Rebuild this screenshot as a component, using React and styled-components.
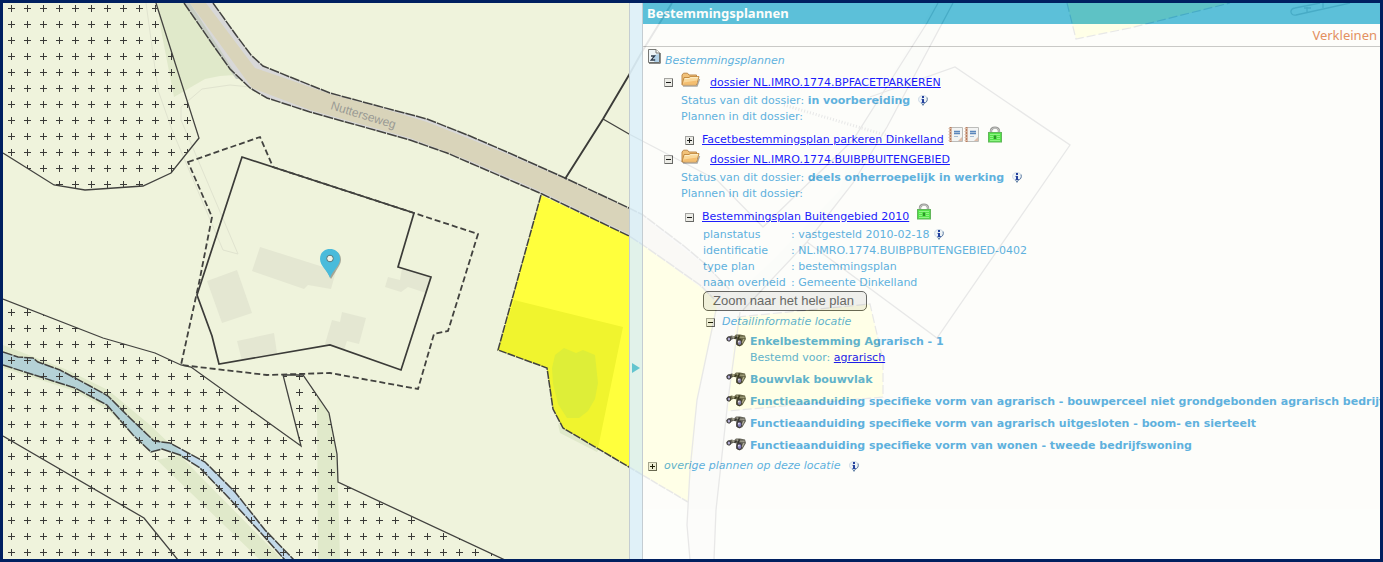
import React, { useState } from 'react';
import styled, { createGlobalStyle } from 'styled-components';

const dossiers = [
    {
        id: 'NL.IMRO.1774.BPFACETPARKEREN',
        status: 'in voorbereiding',
        plan: { name: 'Facetbestemmingsplan parkeren Dinkelland', documents: 2, open: false },
    },
    {
        id: 'NL.IMRO.1774.BUIBPBUITENGEBIED',
        status: 'deels onherroepelijk in werking',
        plan: { name: 'Bestemmingsplan Buitengebied 2010', documents: 0, open: true },
    },
];

const planDetails = [
    { label: 'planstatus', value: 'vastgesteld 2010-02-18', info: true },
    { label: 'identificatie', value: 'NL.IMRO.1774.BUIBPBUITENGEBIED-0402' },
    { label: 'type plan', value: 'bestemmingsplan' },
    { label: 'naam overheid', value: 'Gemeente Dinkelland' },
];

const locationDetails = [
    { title: 'Enkelbestemming Agrarisch - 1', purpose: 'agrarisch' },
    { title: 'Bouwvlak bouwvlak' },
    { title: 'Functieaanduiding specifieke vorm van agrarisch - bouwperceel niet grondgebonden agrarisch bedrijf' },
    { title: 'Functieaanduiding specifieke vorm van agrarisch uitgesloten - boom- en sierteelt' },
    { title: 'Functieaanduiding specifieke vorm van wonen - tweede bedrijfswoning' },
];

export default function App() {
    const [panelOpen, setPanelOpen] = useState(true);

    return (
        <>
            <GlobalStyle />
            <Viewer>
                <PlanMap />
                <MapArea />
                <Handle aria-label="Paneel in- of uitklappen" onClick={() => setPanelOpen(!panelOpen)}>
                    <svg width="8" height="10" viewBox="0 0 8 10"><path d="M0 0L8 5L0 10Z" fill="#63c5cf" /></svg>
                </Handle>
                {panelOpen && <PlanPanel />}
            </Viewer>
        </>
    );
}

function PlanPanel() {
    return (
        <Panel>
            <PanelHeader>Bestemmingsplannen</PanelHeader>
            <Toolbar>
                <ShrinkLink href="#">Verkleinen</ShrinkLink>
            </Toolbar>
            <Tree>
                <RootRow>
                    <SheetIcon />
                    <em>Bestemmingsplannen</em>
                </RootRow>
                {dossiers.map((dossier) => (
                    <Dossier key={dossier.id} dossier={dossier} />
                ))}
                <OtherRow>
                    <Toggle label="overige plannen" />
                    <em>overige plannen op deze locatie</em>
                    <InfoIcon $tight />
                </OtherRow>
            </Tree>
        </Panel>
    );
}

function Dossier({ dossier }) {
    const [open, setOpen] = useState(true);
    return (
        <DossierBlock>
            <DossierRow>
                <Toggle label={dossier.id} open={open} onClick={() => setOpen(!open)} />
                <FolderIcon />
                <PlanLink href="#">dossier {dossier.id}</PlanLink>
            </DossierRow>
            {open && (
                <DossierBody>
                    <Line>Status van dit dossier: <b>{dossier.status}</b><InfoIcon /></Line>
                    <Line>Plannen in dit dossier:</Line>
                    <Plan plan={dossier.plan} />
                </DossierBody>
            )}
        </DossierBlock>
    );
}

function Plan({ plan }) {
    const [open, setOpen] = useState(plan.open);
    return (
        <PlanBlock>
            <PlanRow>
                <Toggle label={plan.name} open={open} onClick={() => setOpen(!open)} />
                <PlanLink href="#">{plan.name}</PlanLink>
                <PlanIcons $wide={plan.documents === 0}>
                    {Array.from({ length: plan.documents }, (_, i) => <NotebookIcon key={i} />)}
                    <LockIcon />
                </PlanIcons>
            </PlanRow>
            {open && <PlanBody />}
        </PlanBlock>
    );
}

function PlanBody() {
    const [open, setOpen] = useState(true);
    return (
        <Details>
            <DetailTable>
                <tbody>
                    {planDetails.map((row) => (
                        <tr key={row.label}>
                            <th scope="row">{row.label}</th>
                            <td>: {row.value}{row.info && <InfoIcon $tight />}</td>
                        </tr>
                    ))}
                </tbody>
            </DetailTable>
            <ZoomButton>Zoom naar het hele plan</ZoomButton>
            <LocationRow>
                <Toggle label="Detailinformatie locatie" open={open} onClick={() => setOpen(!open)} />
                <em>Detailinformatie locatie</em>
            </LocationRow>
            {open && (
                <LocationList>
                    {locationDetails.map((item) => (
                        <LocationItem key={item.title}>
                            <BinocularsIcon />
                            <div>
                                <b>{item.title}</b>
                                {item.purpose && <div>Bestemd voor: <PlanLink href="#">{item.purpose}</PlanLink></div>}
                            </div>
                        </LocationItem>
                    ))}
                </LocationList>
            )}
        </Details>
    );
}

function Toggle({ label, open, onClick }) {
    return (
        <ToggleButton aria-label={label} aria-expanded={!!open} onClick={onClick}>
            <svg width="9" height="9" viewBox="0 0 9 9" shapeRendering="crispEdges">
                <rect x="0.5" y="0.5" width="8" height="8" fill="#ecece8" stroke="#9a9a9a" />
                <path d="M1 8.5H8.5V1" fill="none" stroke="#555" />
                <path d={open ? 'M2 4.5H7' : 'M2 4.5H7M4.5 2V7'} stroke="#000" />
            </svg>
        </ToggleButton>
    );
}

function InfoIcon({ $tight }) {
    return (
        <InfoSvg $tight={$tight} width="10" height="11" viewBox="0 0 10 11">
            <path d="M5 0.5C7.6 0.5 9.5 2.1 9.5 4.4C9.5 6.5 8 7.8 6.4 8.2L5 10.5L4 8.3C2 8 0.5 6.5 0.5 4.4C0.5 2.1 2.4 0.5 5 0.5Z" fill="#edf3fa" stroke="#bccbe0" strokeWidth="0.7" />
            <path d="M9 2.5C10 5 8.5 7.6 6.4 8L5 10.300L3.600 8.200" fill="none" stroke="#54749f" />
            <path d="M5 4V8" fill="none" stroke="#0a2a96" strokeWidth="2" />
            <path d="M3.500 4.400H5M3.500 7.500H6.800" fill="none" stroke="#0a2a96" strokeWidth="0.900" />
            <rect x="4" y="1" width="2" height="2" fill="#0a2a96" />
        </InfoSvg>
    );
}

function SheetIcon() {
    return (
        <svg width="13" height="15" viewBox="0 0 13 15">
            <path d="M0.5 0.5H8L11.5 4V13.5H0.5Z" fill="#eef5fb" stroke="#666" />
            <path d="M6 13V6L11 5V13Z" fill="#a9cdea" />
            <path d="M8 0.5V4H11.5" fill="#fff" stroke="#666" />
            <path d="M12.300 4V14.300H1" fill="none" stroke="#333" strokeWidth="0.800" />
            <path d="M3 7H6.600L3.200 11H7.200" fill="none" stroke="#16263c" strokeWidth="1.300" />
        </svg>
    );
}

function FolderIcon() {
    return (
        <svg width="20" height="16" viewBox="0 0 20 16">
            <path d="M2 14H16L18.500 7" fill="none" stroke="#777" strokeWidth="1.500" opacity="0.700" />
            <path d="M1 12.500V3L2.500 1.200H6.500L8 3H15.500V6" fill="#f3bc6c" stroke="#b87c38" />
            <path d="M1 13L3 5.500H8L9 4.600H18L15.500 13Z" fill="#fcd592" stroke="#b87525" strokeWidth="0.900" />
            <path d="M3.800 6.600H8.500L9.500 5.700H17" fill="none" stroke="#fff1cc" />
            <path d="M2 12.400L2.600 10.500L16 8.500L15 12.400Z" fill="#f5b762" />
        </svg>
    );
}

function NotebookIcon() {
    return (
        <svg width="16" height="17" viewBox="0 0 16 17">
            <path d="M2.5 1.5H14.5V15.5H2.5Z" fill="#f4f5f7" stroke="#b5b5b5" />
            <path d="M2.5 1V16" stroke="#b36b4b" strokeWidth="2" />
            <path d="M0.5 2.5H4M0.5 5.5H4M0.5 8.5H4M0.5 11.5H4M0.5 14.5H4" stroke="#d8b5a0" />
            <path d="M6 5.5H12M6 7.5H12" stroke="#4778b8" strokeWidth="1.300" />
            <path d="M6 10.5H10" stroke="#9db4d2" />
            <path d="M10 15L14 11V15Z" fill="#dcb6a4" />
        </svg>
    );
}

function LockIcon() {
    return (
        <svg width="14" height="17" viewBox="0 0 14 17">
            <path d="M3 8V5C3 0.500 11 0.500 11 5V8" fill="none" stroke="#8b8b8b" strokeWidth="2.400" />
            <path d="M3 8V5C3 1 11 1 11 5V8" fill="none" stroke="#cfcfcf" strokeWidth="0.900" />
            <rect x="0.5" y="6.5" width="13" height="9.5" fill="#3fe036" stroke="#4fae49" />
            <path d="M2 8.5H12M2 10.5H5M9 10.5H12M2 12.5H5M9 12.5H12M2 14.5H12" stroke="#84f57a" />
            <path d="M7 9.5V13" stroke="#158a14" strokeWidth="2" />
        </svg>
    );
}

function BinocularsIcon() {
    return (
        <svg width="20" height="13" viewBox="0 0 20 13">
            <path d="M0 4.500L2 2.500L6 1.500L8 2.500L10 0.500H14L19 1.500L20 5L16.500 11L13.500 12.500L10 10.500L10.500 5.500L7.500 4.800L5 6L3.500 7.500L1 7Z" fill="#55534a" />
            <path d="M6 2.800L8.500 3.500M10.500 1.800L14 3L18.500 3.200M18 5L16 9" fill="none" stroke="#aeab99" strokeWidth="1.100" />
            <path d="M13.500 1.500L12 5M8.500 4.500L10.500 3" stroke="#1b1a17" strokeWidth="1.500" />
            <ellipse cx="3" cy="5" rx="2.200" ry="2.400" fill="#2b282e" />
            <ellipse cx="2.900" cy="5" rx="1.200" ry="1.500" fill="#a9a3cf" />
            <ellipse cx="13.200" cy="8.300" rx="2.900" ry="3.700" fill="#28252b" />
            <ellipse cx="13.500" cy="8.600" rx="1.800" ry="2.300" fill="#7770b5" />
            <circle cx="12.800" cy="7.600" r="0.900" fill="#e2def7" />
        </svg>
    );
}

const ROAD_TOP = '213,3 236,35 251,55 263,66 290,77 330,93 378,106 427,119 470,136 507,152 565,178 629,208 643,215 684,246 703,262 730,290';
const ROAD_BOTTOM = '184,3 213,45 230,69 250,88 267,98 310,112 353,124 410,140 447,153 470,163 542,194 629,236 643,245 700,285 714,299';
const WATER_TOP = '3,352 18,357 33,358 38,362 60,370 90,386 108,396 130,418 154,441 170,443 190,454 205,462 235,492 265,530 294,560';
const WATER_BOTTOM = '3,365 75,388 107,405 133,435 151,452 162,449 180,455 200,468 228,497 260,532 285,560';
const YARD = '188,162 260,137 273,167 414,213 478,234 448,331 434,334 418,389 330,373 267,375 181,365 199,283 212,217';

function PlanMap() {
    return (
        <MapSvg viewBox="3 3 1377 556" preserveAspectRatio="xMinYMin slice" role="img" aria-label="Kaart">
            <defs>
                <pattern id="crosses" x="3" y="0" width="16" height="16" patternUnits="userSpaceOnUse">
                    <path d="M5 8.5H12M8.5 5V12" stroke="#3b3b38" />
                </pattern>
            </defs>
            <rect x="0" y="0" width="1383" height="900" fill="#eff3dc" />

            {/* planting */}
            <g fill="#e0e9ca">
                <path d="M157 3H184L213 45L235 75L220 76L205 79L174 97L161 30Z" />
                <path d="M3 345L65 369L108 390L150 425L172 446L150 452L107 409L75 391L3 368Z" />
                <path d="M157 460L180 455L197 473L283 560H260Z" />
                <path d="M317 395L329 413L337 454L340 560H318Z" />
                <path d="M558 424L560 433L597 452L600 447Z" />
            </g>

            {/* buildings */}
            <g fill="#e4e7d2">
                <path d="M260 247L336 271L331 289L308 285L304 289L252 271Z" />
                <path d="M207 281L237 270L252 313L222 323Z" />
                <path d="M237 341L274 333L277 353L242 361Z" />
                <path d="M342 312L366 318L359 344L347 341L344 350L325 344L332 320L340 322Z" />
                <path d="M402 268L431 277L426 293L408 287L401 292L385 287L388 277L400 280Z" />
            </g>

            <path d="M146 3L158 90L172 130L223 250L238 254L181 120V107L202 89L230 85L250 87" fill="none" stroke="#e0e3cf" />

            {/* road */}
            <path d={`M${ROAD_TOP} L714,299 ${ROAD_BOTTOM.split(' ').reverse().join(' ')}Z`} fill="#d8d8d8" />
            <path d="M184 3L236 79L239 79L190 3Z" fill="#c8cec3" />
            <path d="M206 3L255 68L290 80L330 94L378 107L427 122L470 139L507 154L565 179L629 209L643 217L703 264L730 292L712 297L643 244L629 234L542 192L470 161L410 138L353 122L310 110L252 88L190 3Z" fill="#d9d4ba" />
            <path d="M717 310L740 310L728 400L716 510L714 560H690L687 525L690 470L697 400Z" fill="#e0e0d4" />
            <path d="M740 310L807 242L853 183L887 127L953 3H935L853 140L840 190L773 260L730 300Z" fill="#e6e8d4" />

            {/* designated areas */}
            <path d="M541 195L629 236L643 245L714 297L717 310L697 400L693 450L688 502L629 467L563 428L553 409L547 368L498 350Z" fill="#ffff3c" />
            <path d="M514 300L623 327L598 448L563 428L553 409L547 368L498 350Z" fill="#f0f42e" />
            <path d="M555 355L564 348L576 353L583 350L595 355L598 383L595 399L588 411L579 418L567 418L558 404L553 384L552 368Z" fill="#deee38" />
            <path d="M737 317L870 304L883 360V397L728 411L730 380Z" fill="#ffff3c" />
            <path d="M1067 3L1076 39L1130 28L1230 3Z" fill="#ffff3c" />

            {/* water */}
            <path d={`M${WATER_TOP} ${WATER_BOTTOM.split(' ').reverse().join(' ')}Z`} fill="#b5d2d6" />
            <path d="M174 445L190 454L205 462L235 492L265 530L294 560H285L260 532L228 497L200 468L185 458Z" fill="#c3daea" />

            <path d="M3 3H156L199 138L171 173L143 186L85 190L54 185L3 153Z" fill="url(#crosses)" />
            <path d="M3 299L103 338L155 353L181 365L191 367L301 446L283 375H303L329 413L337 454L338 482L505 560H3Z" fill="url(#crosses)" />

            <g fill="none" stroke="#42423f" strokeWidth="1.300">
                <path d="M156 3L199 138L171 173L143 186L85 190L54 185L3 153" />
                <path d="M3 299L103 338L155 353L181 365L191 367L301 446L283 375H303L329 413L337 454L338 482L505 560" />
                <path d="M3 436L144 518L178 560" />
                <path d="M603 119L629 134L717 180L763 227L853 140L927 23L938 3" />
                <path d="M807 242L937 338L1070 145L955 67L870 97" />
                <path d="M743 310L807 242L853 183L887 127L953 3M716 310L697 400L690 470L687 525L690 560M740 312L728 400L716 510L714 560" />
                <path d="M1350 3L1296 15C1290 16 1289 9 1295 8L1320 3M1304 8H1311M1307 5V12M1323 3V8" />
            </g>
            <g fill="none" stroke="#3b3b38">
                <path d="M242 157L414 213L398 267L431 277L401 370L330 345L219 364L212 336L197 295Z" strokeWidth="1.700" />
                <path d="M565 179L603 119L629 75L643 50L672 3" strokeWidth="1.900" />
            </g>

            <g fill="none" stroke="#42423f" strokeWidth="1.500">
                <path d={`M${YARD}Z`} strokeDasharray="6 3" strokeWidth="1.800" />
                <path d={`M${ROAD_TOP}`} strokeDasharray="10 1" />
                <path d={`M${ROAD_BOTTOM}`} strokeDasharray="10 1" />
                <path d={`M${WATER_TOP}`} strokeDasharray="10 1" />
                <path d={`M${WATER_BOTTOM}`} strokeDasharray="10 1" />
                <path d="M541 195L498 350L547 368L553 409L563 428L629 467L688 502" strokeDasharray="8 1" />
                <path d="M737 317L870 304L883 360V397L728 411M1067 3L1076 39L1130 28L1230 3" strokeDasharray="9 3" strokeWidth="1.200" />
                <path d="M784 105L892 137" strokeDasharray="1 2" strokeWidth="3" />
            </g>

            <StreetName x="330" y="109" transform="rotate(17 330 109)">Nutterseweg</StreetName>

            <g>
                <path d="M331 279L323 265C317 254 325 250 331 250C339 250 344 258 339 266Z" fill="#55554c" opacity="0.450" />
                <path d="M330 278C328 271 320 266 320 259C320 253 324 249 330 249C336 249 340 253 340 259C340 266 332 271 330 278Z" fill="#4abbdb" />
                <circle cx="330" cy="258.500" r="3.300" fill="#f1f3e6" stroke="#4a6a70" strokeWidth="0.900" />
            </g>
        </MapSvg>
    );
}

const GlobalStyle = createGlobalStyle`
    * {
        box-sizing: border-box;
    }
    body {
        margin: 0;
        color: #4ca9de;
        font: 11px/16px "DejaVu Sans", Verdana, sans-serif;
    }
`;

const Viewer = styled.main`
    position: relative;
    display: flex;
    min-height: 100vh;
    border: 3px solid #002060;
    overflow: hidden;
`;

const MapSvg = styled.svg`
    position: absolute;
    inset: 0;
    width: 100%;
    height: 100%;
`;

const StreetName = styled.text`
    fill: #9a9a94;
    font: 12px "Liberation Sans", Arial, sans-serif;
`;

const MapArea = styled.div`
    flex: 626 1 0;
`;

const Handle = styled.button`
    position: relative;
    display: flex;
    flex: none;
    width: 14px;
    padding: 64vh 2px 0;
    border: solid #c4cdd2;
    border-width: 0 1px;
    background: rgba(222, 241, 250, 0.92);
    cursor: pointer;
`;

const Panel = styled.section`
    position: relative;
    flex: 737 1 0;
    min-width: 0;
    overflow: hidden;
    background: #fff;
    opacity: 0.88;
`;

const PanelHeader = styled.h1`
    height: 21px;
    margin: 0;
    padding: 0 4px;
    background: #48bad9;
    color: #fff;
    font: bold 13px/20px "Noto Sans", sans-serif;
`;

const Toolbar = styled.div`
    display: flex;
    justify-content: flex-end;
    align-items: center;
    height: 23px;
    padding: 0 3px;
    border-bottom: 1px solid #c4c4c4;
`;

const ShrinkLink = styled.a`
    color: #e2834f;
    font: 13px/18px "Noto Sans", sans-serif;
    text-decoration: none;
`;

const Tree = styled.div`
    padding: 1px 0 0 5px;
    white-space: nowrap;
`;

const Row = styled.div`
    display: flex;
    align-items: center;
    height: 18px;

    svg {
        flex: none;
    }
`;

const RootRow = styled(Row)`
    gap: 4px;
    height: 24px;
    padding-top: 1px;

    svg {
        align-self: flex-start;
    }
`;

const DossierBlock = styled.section`
    padding-left: 16px;
`;

const DossierRow = styled(Row)`
    height: 21px;

    svg + a {
        margin-left: 9px;
    }
    > svg {
        align-self: flex-start;
        margin-left: 8px;
    }
`;

const DossierBody = styled.div`
    padding-left: 17px;
`;

const Line = styled.div`
    height: 16px;
`;

const PlanBlock = styled.div`
    padding: 6px 0 0 4px;
`;

const PlanRow = styled(Row)`
    gap: 8px;
`;

const PlanIcons = styled.span`
    display: flex;
    align-self: flex-start;
    margin: -5px 0 0 ${(props) => (props.$wide ? '0' : '-4px')};

    svg + svg:last-child {
        margin-left: 8px;
    }
`;

const Details = styled.div`
    padding: 1px 0 0 18px;
`;

const DetailTable = styled.table`
    border-collapse: collapse;

    th,
    td {
        height: 16px;
        padding: 0;
        font-weight: normal;
        text-align: left;
    }
    th {
        width: 88px;
    }
`;

const ZoomButton = styled.button`
    display: block;
    height: 20px;
    padding: 0 12px 0 9px;
    border: 1px solid #555;
    border-radius: 5px;
    background: #efefef;
    color: #555;
    font: 13px/16px "Liberation Sans", Arial, sans-serif;
`;

const LocationRow = styled(Row)`
    gap: 7px;
    margin-top: 2px;
    padding-left: 3px;
`;

const LocationList = styled.ul`
    margin: 0;
    padding: 0 0 0 23px;
    list-style: none;
`;

const LocationItem = styled.li`
    display: flex;
    gap: 4px;
    padding: 3px 0;

    svg {
        flex: none;
    }
`;

const OtherRow = styled(Row)`
    gap: 7px;
`;

const PlanLink = styled.a`
    color: #0000ff;
    text-decoration: underline;
`;

const ToggleButton = styled.button`
    display: flex;
    flex: none;
    padding: 0;
    border: 0;
    background: none;
    cursor: pointer;
`;

const InfoSvg = styled.svg`
    margin-left: ${(props) => (props.$tight ? '4px' : '8px')};
    vertical-align: -2px;

    em + & {
        margin-left: 1px;
    }
`;
